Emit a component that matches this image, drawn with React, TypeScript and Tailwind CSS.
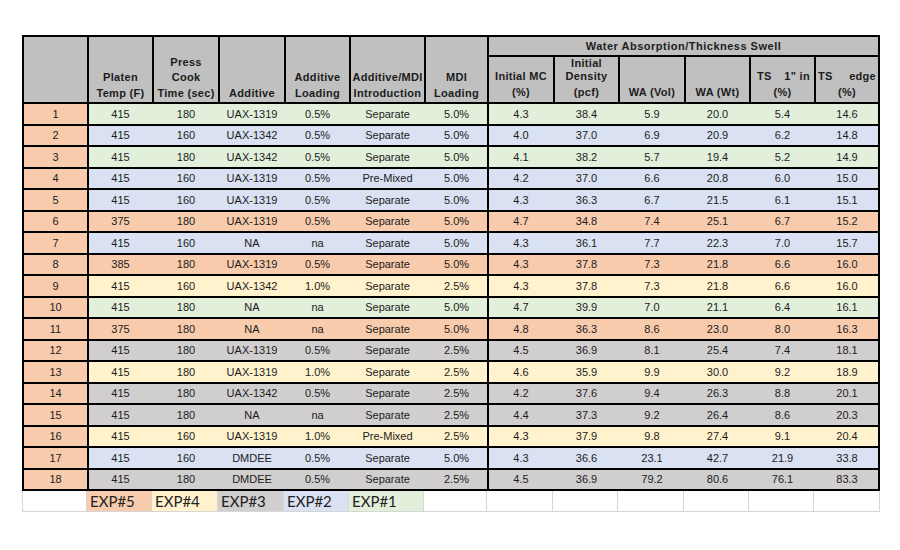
const colors = {
  g: 'bg-[#e2efda]',
  b: 'bg-[#d9e1f2]',
  o: 'bg-[#f8cbad]',
  y: 'bg-[#fff2cc]',
  s: 'bg-[#d0cece]',
};

type Row = { c: keyof typeof colors; v: string[] };

const rows: Row[] = [
  { c: 'g', v: ['415', '180', 'UAX-1319', '0.5%', 'Separate', '5.0%', '4.3', '38.4', '5.9', '20.0', '5.4', '14.6'] },
  { c: 'b', v: ['415', '160', 'UAX-1342', '0.5%', 'Separate', '5.0%', '4.0', '37.0', '6.9', '20.9', '6.2', '14.8'] },
  { c: 'g', v: ['415', '180', 'UAX-1342', '0.5%', 'Separate', '5.0%', '4.1', '38.2', '5.7', '19.4', '5.2', '14.9'] },
  { c: 'b', v: ['415', '160', 'UAX-1319', '0.5%', 'Pre-Mixed', '5.0%', '4.2', '37.0', '6.6', '20.8', '6.0', '15.0'] },
  { c: 'b', v: ['415', '160', 'UAX-1319', '0.5%', 'Separate', '5.0%', '4.3', '36.3', '6.7', '21.5', '6.1', '15.1'] },
  { c: 'o', v: ['375', '180', 'UAX-1319', '0.5%', 'Separate', '5.0%', '4.7', '34.8', '7.4', '25.1', '6.7', '15.2'] },
  { c: 'b', v: ['415', '160', 'NA', 'na', 'Separate', '5.0%', '4.3', '36.1', '7.7', '22.3', '7.0', '15.7'] },
  { c: 'o', v: ['385', '180', 'UAX-1319', '0.5%', 'Separate', '5.0%', '4.3', '37.8', '7.3', '21.8', '6.6', '16.0'] },
  { c: 'y', v: ['415', '160', 'UAX-1342', '1.0%', 'Separate', '2.5%', '4.3', '37.8', '7.3', '21.8', '6.6', '16.0'] },
  { c: 'g', v: ['415', '180', 'NA', 'na', 'Separate', '5.0%', '4.7', '39.9', '7.0', '21.1', '6.4', '16.1'] },
  { c: 'o', v: ['375', '180', 'NA', 'na', 'Separate', '5.0%', '4.8', '36.3', '8.6', '23.0', '8.0', '16.3'] },
  { c: 's', v: ['415', '180', 'UAX-1319', '0.5%', 'Separate', '2.5%', '4.5', '36.9', '8.1', '25.4', '7.4', '18.1'] },
  { c: 'y', v: ['415', '180', 'UAX-1319', '1.0%', 'Separate', '2.5%', '4.6', '35.9', '9.9', '30.0', '9.2', '18.9'] },
  { c: 's', v: ['415', '180', 'UAX-1342', '0.5%', 'Separate', '2.5%', '4.2', '37.6', '9.4', '26.3', '8.8', '20.1'] },
  { c: 's', v: ['415', '180', 'NA', 'na', 'Separate', '2.5%', '4.4', '37.3', '9.2', '26.4', '8.6', '20.3'] },
  { c: 'y', v: ['415', '160', 'UAX-1319', '1.0%', 'Pre-Mixed', '2.5%', '4.3', '37.9', '9.8', '27.4', '9.1', '20.4'] },
  { c: 'b', v: ['415', '160', 'DMDEE', '0.5%', 'Separate', '5.0%', '4.3', '36.6', '23.1', '42.7', '21.9', '33.8'] },
  { c: 's', v: ['415', '180', 'DMDEE', '0.5%', 'Separate', '2.5%', '4.5', '36.9', '79.2', '80.6', '76.1', '83.3'] },
];

const leftHeads = [
  ['Platen', 'Temp (F)'],
  ['Press', 'Cook', 'Time (sec)'],
  ['Additive'],
  ['Additive', 'Loading'],
  ['Additive/MDI', 'Introduction'],
  ['MDI', 'Loading'],
];

const leftWidths = ['w-[63px]', 'w-[64px]', 'w-[64px]', 'w-[63px]', 'w-[73px]', 'w-[61px]'];

const legend = [
  { w: 'w-[65px]', bg: 'bg-white border-l', t: '' },
  { w: 'w-[65px]', bg: 'bg-[#f8cbad]', t: 'EXP#5' },
  { w: 'w-[66px]', bg: 'bg-[#fff2cc]', t: 'EXP#4' },
  { w: 'w-[66px]', bg: 'bg-[#d0cece]', t: 'EXP#3' },
  { w: 'w-[65px]', bg: 'bg-[#d9e1f2]', t: 'EXP#2' },
  { w: 'w-[75px]', bg: 'bg-[#e2efda]', t: 'EXP#1' },
  { w: 'w-[63px]', bg: 'bg-white', t: '' },
  { w: 'w-[66px]', bg: 'bg-white', t: '' },
  { w: 'w-[65px]', bg: 'bg-white', t: '' },
  { w: 'w-[66px]', bg: 'bg-white', t: '' },
  { w: 'w-[65px]', bg: 'bg-white', t: '' },
  { w: 'w-[65px]', bg: 'bg-white', t: '' },
  { w: 'w-[66px]', bg: 'bg-white', t: '' },
];

export default function App() {
  return (
    <div
      className="h-[550px] w-[900px] overflow-hidden bg-white pl-[22px] pt-[35px] text-[#1c1c1c]"
      style={{ fontFamily: '"Liberation Sans", Arial, sans-serif' }}
    >
      <div className="flex w-[858px] flex-col gap-[2px] bg-black p-[2px]">
        {/* header */}
        <div className="flex h-[65px] gap-[2px] text-[11px] font-bold leading-[15.5px] tracking-[0.3px]">
          <div className="w-[63px] bg-[#c0c0c0]" />
          {leftHeads.map((h, i) => (
            <div
              key={i}
              className={`${leftWidths[i]} flex flex-col items-center justify-end bg-[#c0c0c0] pb-[1px] text-center`}
            >
              {h.map((l) => (
                <div key={l} className="whitespace-nowrap">
                  {l}
                </div>
              ))}
            </div>
          ))}
          <div className="flex w-[389px] flex-col gap-[2px]">
            <div className="flex h-[18px] items-center justify-center bg-[#c0c0c0] pt-[2px] tracking-[0.5px]">
              Water Absorption/Thickness Swell
            </div>
            <div className="grid h-[45px] grid-cols-[64px_63px_64px_63px_63px_62px] gap-x-[2px]">
              <div className="flex flex-col items-center justify-end overflow-hidden bg-[#c0c0c0] pb-[2px]">
                <div>Initial MC</div>
                <div>(%)</div>
              </div>
              <div className="flex flex-col items-center justify-end overflow-hidden bg-[#c0c0c0] pb-[2px]">
                <div className="leading-[11px]">Initial</div>
                <div>Density</div>
                <div>(pcf)</div>
              </div>
              <div className="flex flex-col items-center justify-end bg-[#c0c0c0] pb-[2px]">
                <div>WA (Vol)</div>
              </div>
              <div className="flex flex-col items-center justify-end bg-[#c0c0c0] pb-[2px]">
                <div>WA (Wt)</div>
              </div>
              <div className="flex flex-col justify-end bg-[#c0c0c0] pb-[2px]">
                <div className="flex justify-between pl-[6px] pr-[4px]">
                  <span>TS</span>
                  <span>1" in</span>
                </div>
                <div className="text-center">(%)</div>
              </div>
              <div className="flex flex-col justify-end bg-[#c0c0c0] pb-[2px]">
                <div className="flex justify-between pl-[2px] pr-[2px]">
                  <span>TS</span>
                  <span>edge</span>
                </div>
                <div className="text-center">(%)</div>
              </div>
            </div>
          </div>
        </div>

        {/* data rows */}
        {rows.map((r, i) => (
          <div
            key={i}
            className={`flex gap-[2px] text-[11px] ${i % 2 === 0 ? 'h-[20px]' : 'h-[19px]'}`}
          >
            <div className="flex w-[63px] items-center justify-center bg-[#f8cbad]">{i + 1}</div>
            <div
              className={`grid w-[398px] grid-cols-[63px_64px_64px_63px_73px_61px] gap-x-[2px] ${colors[r.c]}`}
            >
              {r.v.slice(0, 6).map((v, j) => (
                <div key={j} className="flex items-center justify-center whitespace-nowrap">
                  {v}
                </div>
              ))}
            </div>
            <div
              className={`grid w-[389px] grid-cols-[64px_63px_64px_63px_63px_62px] gap-x-[2px] ${colors[r.c]}`}
            >
              {r.v.slice(6).map((v, j) => (
                <div key={j} className="flex items-center justify-center">
                  {v}
                </div>
              ))}
            </div>
          </div>
        ))}
      </div>

      {/* legend */}
      <div className="flex h-[21px] w-[858px]" style={{ fontFamily: 'Lato, "Open Sans", sans-serif' }}>
        {legend.map((c, i) => (
          <div
            key={i}
            className={`${c.w} ${c.bg} flex items-center border-b border-r border-[#d6d6d6] pl-[3px] text-[15px] text-[#222]`}
          >
            {c.t}
          </div>
        ))}
      </div>
    </div>
  );
}
